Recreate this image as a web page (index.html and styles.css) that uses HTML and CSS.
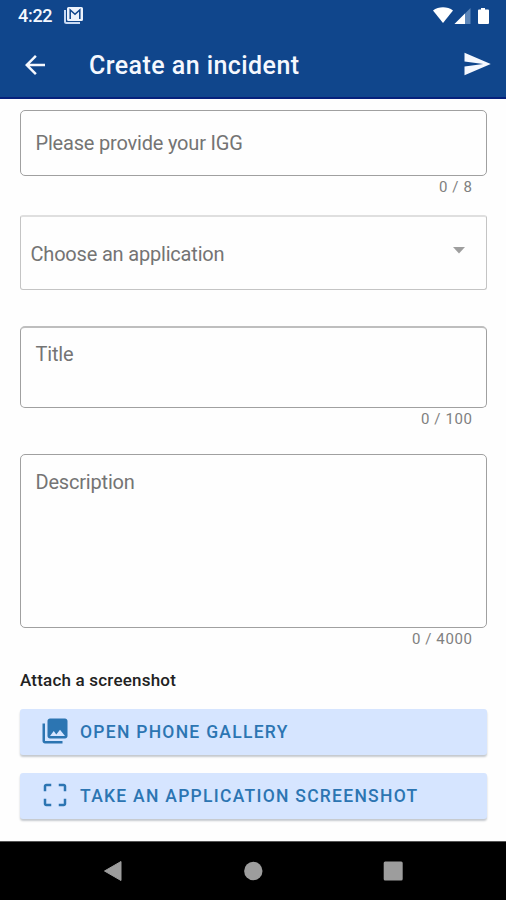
FILE: index.html
```html
<!DOCTYPE html>
<html lang="en">
<head>
<meta charset="utf-8">
<title>Create an incident</title>
<link rel="stylesheet" href="styles.css">
</head>
<body>
<div class="screen">
  <header class="header">
    <div class="status">
      <span class="clock">4:22</span>
      <svg class="mail" width="20" height="17" viewBox="0 0 20 17">
        <path d="M1 3v11.500a1.500 1.500 0 0 0 1.500 1.500H16" fill="none" stroke="#c9daf3" stroke-width="2"/>
        <path d="M4.500 0h13A1.500 1.500 0 0 1 19 1.500v11a1.500 1.500 0 0 1-1.500 1.500h-13A1.500 1.500 0 0 1 3 12.500v-11A1.500 1.500 0 0 1 4.500 0z" fill="#edf3fc"/>
        <path d="M6.200 12V3l4.800 4.300L15.800 3v9" fill="none" stroke="#10468c" stroke-width="1.500"/>
      </svg>
      <svg class="signals" width="58" height="18" viewBox="0 0 58 18">
        <path d="M0 3.400C5.500-.8 14.500-.8 20 3.400L10 16z" fill="#fff"/>
        <path d="M37.500 1v16h-16z" fill="#5c86b9"/>
        <path d="M32 6.500V17H21.500z" fill="#fff"/>
        <path d="M48 1h4v1.500h3a1 1 0 0 1 1 1V16a1 1 0 0 1-1 1h-9a1 1 0 0 1-1-1V3.500a1 1 0 0 1 1-1h2z" fill="#fff"/>
      </svg>
    </div>
    <div class="toolbar">
      <svg class="back" width="30" height="30" viewBox="0 0 24 24"><path d="M20 11H7.830l5.590-5.590L12 4l-8 8 8 8 1.410-1.410L7.830 13H20v-2z"/></svg>
      <h1 class="title">Create an incident</h1>
      <svg class="send" width="30" height="30" viewBox="0 0 24 24"><path d="M2.010 21L23 12 2.010 3 2 10l15 2-15 2z"/></svg>
    </div>
  </header>
  <main class="form">
    <div class="field igg"><span class="label">Please provide your IGG</span></div>
    <div class="counter">0 / 8</div>
    <div class="field select">
      <span class="label">Choose an application</span>
      <svg class="caret" width="12" height="7" viewBox="0 0 12 7"><path d="M0 0h12L6 6.500z"/></svg>
    </div>
    <div class="field subject"><span class="label">Title</span></div>
    <div class="counter">0 / 100</div>
    <div class="field description"><span class="label">Description</span></div>
    <div class="counter">0 / 4000</div>
    <h2 class="attach">Attach a screenshot</h2>
    <div class="button">
      <svg width="30" height="30" viewBox="0 0 24 24"><path d="M22 16V4c0-1.100-.9-2-2-2H8c-1.100 0-2 .9-2 2v12c0 1.100.9 2 2 2h12c1.100 0 2-.9 2-2zm-11-4l2.030 2.710L16 11l4 5H8l3-4zM2 6v14c0 1.100.9 2 2 2h14v-2H4V6H2z"/></svg>
      <span class="action">OPEN PHONE GALLERY</span>
    </div>
    <div class="button">
      <svg width="30" height="30" viewBox="0 0 24 24"><path d="M3 5v4h2V5h4V3H5c-1.100 0-2 .9-2 2zm2 10H3v4c0 1.100.9 2 2 2h4v-2H5v-4zm14 4h-4v2h4c1.100 0 2-.9 2-2v-4h-2v4zm0-16h-4v2h4v4h2V5c0-1.100-.9-2-2-2z"/></svg>
      <span class="action">TAKE AN APPLICATION SCREENSHOT</span>
    </div>
  </main>
  <nav class="nav">
    <svg width="20" height="22" viewBox="0 0 20 22"><path d="M1.500 11L18 1.500v19z" stroke="#9d9d9d" stroke-width="1" stroke-linejoin="round"/></svg>
    <svg width="20" height="20" viewBox="0 0 20 20"><circle cx="10.300" cy="10" r="9.200"/></svg>
    <svg width="20" height="20" viewBox="0 0 20 20"><rect x=".7" y=".5" width="19" height="19" rx="1.500"/></svg>
  </nav>
</div>
</body>
</html>
```

FILE: styles.css
```css
* { box-sizing: border-box; }
body { margin: 0; font-family: Roboto, "Liberation Sans", sans-serif; background: #fff; }
svg { display: block; flex: none; }
.screen { width: 506px; height: 900px; display: flex; flex-direction: column; background: #fefefe; overflow: hidden; }
.header { height: 99px; flex: none; background: #10468c; border-bottom: 2px solid #06217c; color: #f5f8fe; }
.status { height: 31px; display: flex; align-items: center; padding: 1px 15px 0 18px; }
.clock { font-size: 18px; font-weight: 500; line-height: 20px; width: 46px; letter-spacing: -0.3px; }
.mail { margin-top: -1px; }
.signals { margin-left: auto; }
.toolbar { height: 66px; display: flex; align-items: center; padding: 2px 14px 0 20px; }
.back, .send { fill: #f5f8fe; }
.back { margin-top: -1px; }
.title { margin: 2px 0 0 39px; font-size: 25px; font-weight: 500; line-height: 30px; letter-spacing: 0.43px; white-space: nowrap; }
.send { margin-left: auto; margin-top: -2px; }
.form { flex: none; height: 742px; padding: 11px 19px 0 20px; }
.field { display: flex; align-items: flex-start; border: 1.500px solid #a0a0a0; border-radius: 5px; padding-left: 14.500px; }
.igg { height: 66px; align-items: center; }
.select { height: 75px; margin-top: 17px; align-items: center; padding: 2px 21px 0 9.500px; border-color: #c4c4c4; border-radius: 3px; border-top: 2px solid #dfdfdf; }
.subject { height: 82px; margin-top: 36px; padding-top: 14px; border-top: 2px solid #bebebe; }
.description { height: 174px; margin-top: 24px; padding-top: 15px; }
.label { font-size: 20px; line-height: 24px; letter-spacing: -0.19px; color: #747474; white-space: nowrap; }
.caret { margin-left: auto; margin-top: -7px; fill: #9e9e9e; }
.counter { height: 22px; padding: 3px 14.500px 0 0; text-align: right; font-size: 15px; line-height: 16px; letter-spacing: 0.6px; color: #808080; }
.attach { margin: 19px 0 0; height: 40px; font-size: 17px; line-height: 22px; font-weight: 500; letter-spacing: 0.2px; color: #222; }
.button { height: 46px; margin-bottom: 18px; display: flex; align-items: center; gap: 10px; padding-left: 20px; color: #2c75b2; background: #d6e5ff; border-radius: 3px; box-shadow: 0 2px 2px #c5c9ce; }
.button svg { fill: #2c75b2; margin-top: -2px; margin-left: -0.5px; margin-right: 0.5px; }
.action { font-size: 17.500px; line-height: 24px; font-weight: 500; letter-spacing: 1.270px; white-space: nowrap; }
.nav { height: 59px; flex: none; display: flex; align-items: center; gap: 120px; padding-left: 103px; background: #000; border-top: 1px solid #555; fill: #9d9d9d; }
```
